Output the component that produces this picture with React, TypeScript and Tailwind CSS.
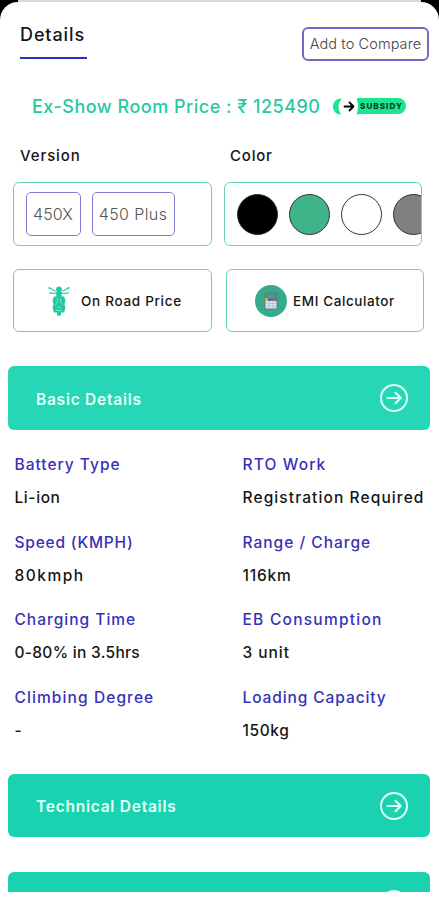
import { FC, ReactNode } from 'react';
import clsx from 'clsx';

const details = [
  { label: 'Battery Type', value: 'Li-ion', labelClass: 'tracking-[1px]', valueClass: 'tracking-[0.6px]' },
  { label: 'RTO Work', value: 'Registration Required', labelClass: 'tracking-[1.15px]', valueClass: 'tracking-[1.1px]' },
  { label: 'Speed (KMPH)', value: '80kmph', labelClass: 'tracking-[0.8px]', valueClass: 'tracking-[1.5px]' },
  { label: 'Range / Charge', value: '116km', labelClass: 'tracking-[1px]', valueClass: 'tracking-[0.8px]' },
  { label: 'Charging Time', value: '0-80% in 3.5hrs', labelClass: 'tracking-[1px]', valueClass: 'tracking-[0.3px]' },
  { label: 'EB Consumption', value: '3 unit', labelClass: 'tracking-[1.25px]', valueClass: 'tracking-[0.95px]' },
  { label: 'Climbing Degree', value: '-', labelClass: 'tracking-[1.1px]', valueClass: 'tracking-[0.6px]' },
  { label: 'Loading Capacity', value: '150kg', labelClass: 'tracking-[0.9px]', valueClass: 'tracking-[0.6px]' },
];

const colors = ['bg-black', 'bg-[#3fb489]', 'bg-white', 'bg-[#808080]'];

const ArrowCircle: FC = () => (
  <svg className="h-7 w-7 shrink-0" viewBox="0 0 28 28" fill="none" stroke="#dcfff6" strokeLinecap="round" strokeLinejoin="round">
    <circle cx="14" cy="14" r="13" strokeWidth="2" />
    <path d="M7.5 14h13M15.5 8.8l5.2 5.2-5.2 5.2" strokeWidth="2.2" />
  </svg>
);

const ScooterIcon: FC = () => (
  <svg className="h-[30px] w-[22px] shrink-0" viewBox="0 0 22 30" fill="#20c9a0">
    <path d="M1.500 2l6 3.200M20.500 2l-6 3.200M1 6.800q4 1.200 7.500 0h5q3.500 1.200 7.500 0" fill="none" stroke="#20c9a0" strokeWidth="1.100" />
    <circle cx="1.500" cy="2" r="1" />
    <circle cx="20.500" cy="2" r="1" />
    <circle cx="11" cy="3.500" r="2.900" />
    <path d="M8 6h6l-.5 6h-5z" />
    <path d="M6 10.500h10l1.500 3.500-1 4.500 1 3-1.500 5H6l-1.500-5 1-3-1-4.500z" />
    <rect x="9" y="24" width="4" height="6" rx="2" />
    <path d="M9.300 12.500v4l-2 2.500M12.700 12.500v4l2 2.500M8.500 22.500l2.500-2 2.500 2M8 24.500h6" fill="none" stroke="#a6ecd9" strokeWidth=".7" />
  </svg>
);

const CalculatorIcon: FC = () => (
  <svg className="h-8 w-8 shrink-0" viewBox="0 0 32 32">
    <circle cx="16" cy="16" r="16" fill="#35ab8b" />
    <rect x="9.500" y="7.500" width="13" height="17" rx="1" fill="#64798a" />
    <rect x="11.500" y="9" width="9.500" height="4" fill="#3f9f8c" />
    <rect x="10.500" y="16" width="11" height="7.500" fill="#dce6f0" />
    <path d="M10.500 13h2v3h-2z" fill="#e5c454" />
    <path d="M14 13.500h2.500v2H14z" fill="#5361c9" />
    <path d="M18 13.500h3v2h-3z" fill="#c3526a" />
    <path d="M10.500 18.500h11M10.500 21h11M14.200 16v7.500M17.900 16v7.500" stroke="#a5b2c2" strokeWidth=".6" />
  </svg>
);

const SubsidyBadge: FC = () => (
  <div className="flex h-[17px] w-[74px] items-center">
    <svg className="h-[17px] w-[25px] shrink-0" viewBox="0 0 25 17" fill="none">
      <path d="M9 .5C3 .5 0 4 0 8.500S3 16.500 8.500 16.500C4.500 12 4.500 5 9 .5z" fill="#1be58e" />
      <path d="M11.500 8.500h9M16.500 4.500l4 4-4 4" stroke="#000" strokeWidth="1.800" strokeLinecap="round" strokeLinejoin="round" />
      <path d="M23.500 .5H25v16h-1.500q3-8 0-16z" fill="#1be58e" />
    </svg>
    <span className="flex h-4 w-[48px] items-center rounded-r-full bg-[#1be58e] pl-0.5 text-[8px] font-extrabold tracking-[1.1px] text-[#073b2a]">
      SUBSIDY
    </span>
  </div>
);

const Panel: FC<{ className?: string; children: ReactNode }> = ({ className, children }) => (
  <div className={clsx('flex items-center rounded-[6px] border-[1.5px] border-[#68d5b5]', className)}>{children}</div>
);

const SectionBar: FC<{ title?: string; className: string }> = ({ title, className }) => (
  <button className={clsx('ml-2 flex w-[422px] shrink-0 items-center justify-between rounded-[6px] pr-[22px] pl-7 text-left', className)}>
    <span className="mt-[3px] text-[15.500px] font-semibold tracking-[0.75px] text-[#e2fff8]">{title}</span>
    <ArrowCircle />
  </button>
);

export default function App() {
  return (
    <div className="h-[900px] w-[439px] overflow-hidden bg-black font-['Inter',sans-serif] whitespace-nowrap text-[#161616]">
      <div className="mx-[18px] h-0.5 bg-[#d9d9d9]" />
      <main className="flex h-[898px] flex-col rounded-t-[18px] bg-white">
        <header className="flex h-[59px] shrink-0 justify-between pr-2.5 pl-5">
          <h1 className="mt-[19px] h-[38px] w-[67px] border-b-2 border-[#2433c4] text-[18px] leading-7 font-medium tracking-[0.9px]">
            Details
          </h1>
          <button className="mt-[25px] h-[34px] w-[127px] rounded-[6px] border-2 border-[#7468c8] text-[14.500px] font-light tracking-[0.1px] text-[#444]">
            Add to Compare
          </button>
        </header>

        <div className="mt-[33px] flex h-6 shrink-0 items-center pl-8 text-[#27c9a0]">
          <p className="w-[301px] text-[18px] font-medium tracking-[0.5px]">Ex-Show Room Price : ₹ 125490</p>
          <SubsidyBadge />
        </div>

        <div className="mt-[26px] grid h-6 shrink-0 grid-cols-[210px_1fr] items-center pl-5 text-[15px] font-medium">
          <h2 className="tracking-[0.9px]">Version</h2>
          <h2 className="tracking-[0.8px]">Color</h2>
        </div>

        <div className="mt-3.5 flex h-16 shrink-0 gap-3 pl-[13px]">
          <Panel className="w-[199px] gap-[11px] pl-[11.500px] text-[16px] font-light text-[#555]">
            <button className="h-11 w-[55px] rounded-[5px] border border-[#847bd0] tracking-[0.1px]">450X</button>
            <button className="h-11 w-[83px] rounded-[5px] border border-[#847bd0] tracking-[0.4px]">450 Plus</button>
          </Panel>
          <Panel className="w-[198px] gap-[11px] overflow-hidden pl-[11.500px]">
            {colors.map((color) => (
              <span key={color} className={clsx('h-[41px] w-[41px] shrink-0 rounded-full border border-[#333]', color)} />
            ))}
          </Panel>
        </div>

        <div className="mt-[23px] flex h-[63px] shrink-0 gap-3.5 pl-[13px] text-[13.500px] font-medium">
          <Panel className="w-[199px] gap-[11px] pl-[34px]">
            <ScooterIcon />
            <span className="mt-0.5 tracking-[0.7px]">On Road Price</span>
          </Panel>
          <Panel className="w-[198px] gap-1.5 pl-[28px]">
            <CalculatorIcon />
            <span className="mt-0.5 tracking-[0.6px]">EMI Calculator</span>
          </Panel>
        </div>

        <SectionBar title="Basic Details" className="mt-[34px] h-16 bg-[#27d6b4]" />

        <dl className="mt-[23px] grid h-[321px] shrink-0 auto-rows-[77.600px] grid-cols-[228px_1fr] pl-[14.500px] text-[15.500px] leading-6 font-medium">
          {details.map((item) => (
            <div key={item.label}>
              <dt className={clsx('text-[#3432b8]', item.labelClass)}>{item.label}</dt>
              <dd className={clsx('mt-[9px]', item.valueClass)}>{item.value}</dd>
            </div>
          ))}
        </dl>

        <SectionBar title="Technical Details" className="h-[63px] bg-[#1bd2b0]" />

        <div className="mt-[35px] h-5 shrink-0 overflow-hidden">
          <SectionBar className="h-16 bg-[#1bd2b0]" />
        </div>
      </main>
    </div>
  );
}
